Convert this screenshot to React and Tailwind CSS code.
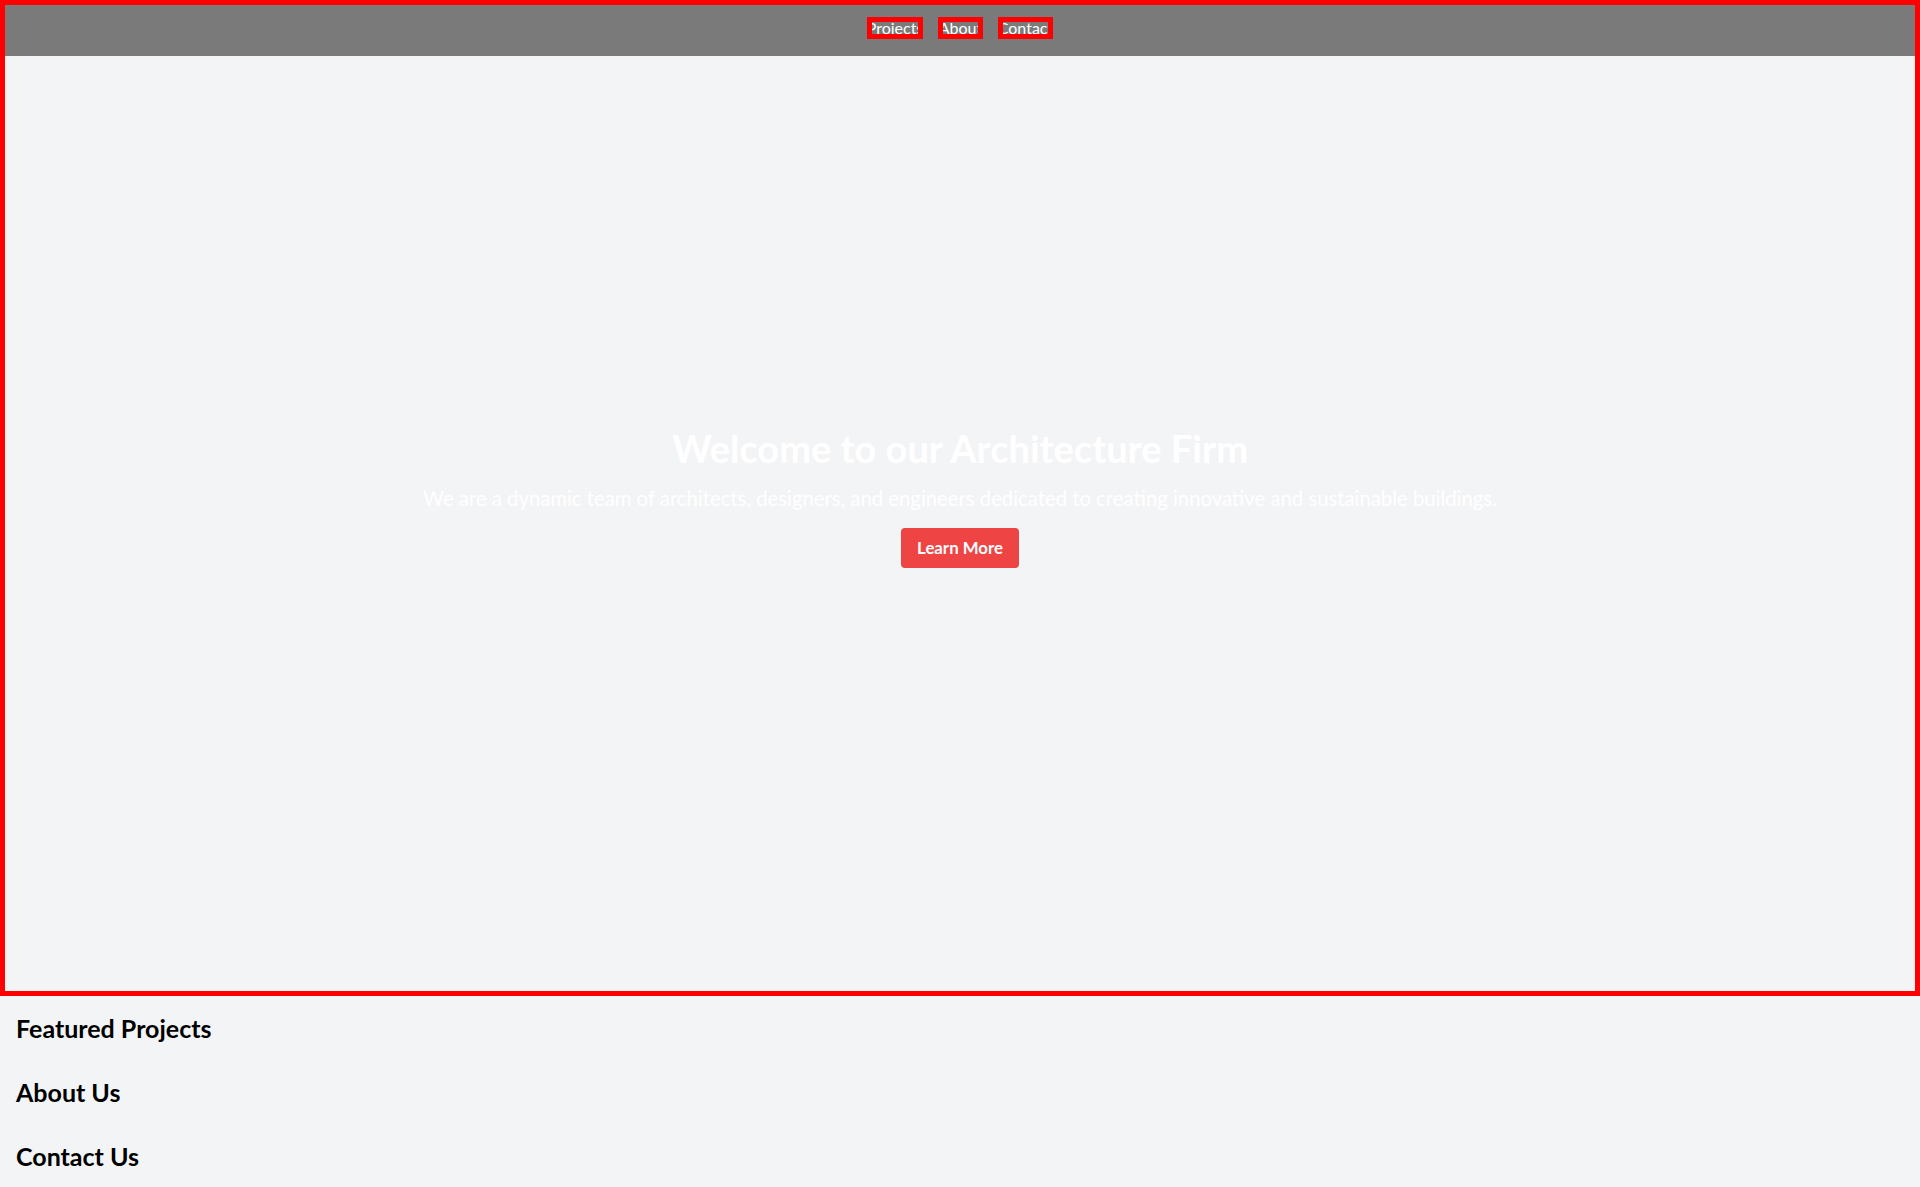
export default function App() {
  return (
    <div className="min-h-screen bg-[#f3f4f6] font-['Lato',_'Open_Sans',_sans-serif]">
      <section className="relative h-[996px] flex flex-col items-center justify-center text-center">
        <header className="absolute top-0 inset-x-0 h-14 bg-[#7a7a7a] flex items-center justify-center gap-[15px]">
          <a className="w-[56px] h-[22px] border-[5px] border-[#ff0000] overflow-hidden flex items-center justify-center whitespace-nowrap text-base text-white">Projects</a>
          <a className="w-[45px] h-[22px] border-[5px] border-[#ff0000] overflow-hidden flex items-center justify-center whitespace-nowrap text-base text-white">About</a>
          <a className="w-[55px] h-[22px] border-[5px] border-[#ff0000] overflow-hidden flex items-center justify-center whitespace-nowrap text-base text-white">Contact</a>
        </header>
        <h1 className="text-[38px] leading-10 font-bold text-white mb-4">Welcome to our Architecture Firm</h1>
        <p className="text-[20.3px] leading-7 text-white mb-4">We are a dynamic team of architects, designers, and engineers dedicated to creating innovative and sustainable buildings.</p>
        <button className="bg-[#ef4444] text-white text-[16.8px] leading-6 font-bold px-4 py-2 rounded">Learn More</button>
        <div className="pointer-events-none absolute inset-0 border-[5px] border-[#ff0000]"></div>
      </section>
      <section className="p-4">
        <h2 className="text-[25px] leading-8 font-bold text-black">Featured Projects</h2>
      </section>
      <section className="p-4">
        <h2 className="text-[25px] leading-8 font-bold text-black">About Us</h2>
      </section>
      <section className="p-4">
        <h2 className="text-[25px] leading-8 font-bold text-black">Contact Us</h2>
      </section>
    </div>
  );
}
